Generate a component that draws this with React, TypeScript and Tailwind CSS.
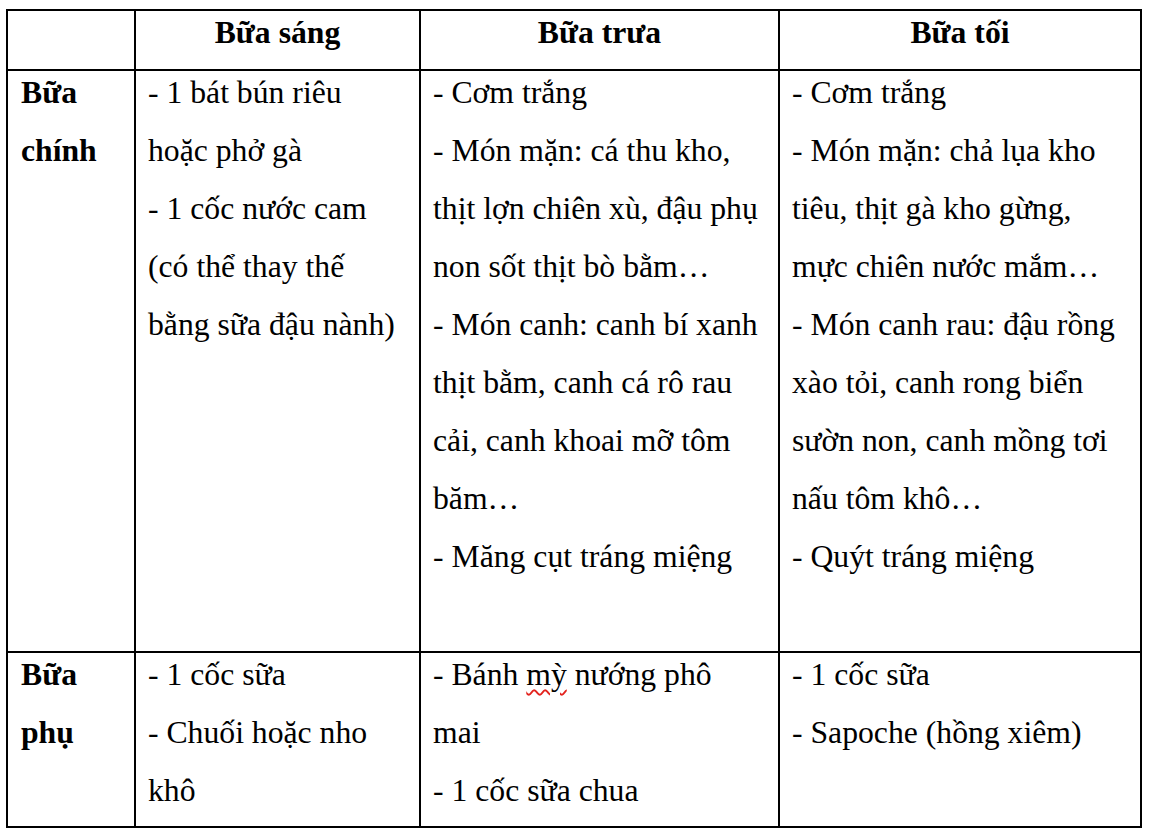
import React from 'react';

type Line = React.ReactNode;

const header = ['', 'Bữa sáng', 'Bữa trưa', 'Bữa tối'];

const rows: { label: string[]; cells: Line[][] }[] = [
  {
    label: ['Bữa', 'chính'],
    cells: [
      ['- 1 bát bún riêu', 'hoặc phở gà', '- 1 cốc nước cam', '(có thể thay thế', 'bằng sữa đậu nành)'],
      [
        '- Cơm trắng',
        '- Món mặn: cá thu kho,',
        'thịt lợn chiên xù, đậu phụ',
        'non sốt thịt bò bằm…',
        '- Món canh: canh bí xanh',
        'thịt bằm, canh cá rô rau',
        'cải, canh khoai mỡ tôm',
        'băm…',
        '- Măng cụt tráng miệng',
      ],
      [
        '- Cơm trắng',
        '- Món mặn: chả lụa kho',
        'tiêu, thịt gà kho gừng,',
        'mực chiên nước mắm…',
        '- Món canh rau: đậu rồng',
        'xào tỏi, canh rong biển',
        'sườn non, canh mồng tơi',
        'nấu tôm khô…',
        '- Quýt tráng miệng',
      ],
    ],
  },
  {
    label: ['Bữa', 'phụ'],
    cells: [
      ['- 1 cốc sữa', '- Chuối hoặc nho', 'khô'],
      [
        <>
          - Bánh{' '}
          <span className="underline decoration-wavy decoration-[#e3231e] decoration-[1.5px] underline-offset-[4px]">mỳ</span>{' '}
          nướng phô
        </>,
        'mai',
        '- 1 cốc sữa chua',
      ],
      ['- 1 cốc sữa', '- Sapoche (hồng xiêm)'],
    ],
  },
];

function Lines({ lines, bold }: { lines: Line[]; bold?: boolean }) {
  return (
    <>
      {lines.map((line, i) => (
        <div key={i} className={`h-[58px] leading-[44px] whitespace-nowrap ${bold ? 'font-bold' : ''}`}>
          {line}
        </div>
      ))}
    </>
  );
}

export default function App() {
  return (
    <div className="min-h-screen bg-white pl-[6px] pt-[9px] text-black text-[31.7px] font-['Liberation_Serif','DejaVu_Serif',serif]">
      <div className="inline-grid grid-cols-[126px_283px_357px_360px] grid-rows-[58px_580px_173px] gap-[2px] p-[2px] bg-black">
        {header.map((h, i) => (
          <div key={i} className="bg-white px-[12px] text-center">
            {h && <Lines lines={[h]} bold />}
          </div>
        ))}
        {rows.map((row, r) => (
          <React.Fragment key={r}>
            <div className="bg-white px-[13px]">
              <Lines lines={row.label} bold />
            </div>
            {row.cells.map((cell, c) => (
              <div key={c} className="bg-white px-[12px]">
                <Lines lines={cell} />
              </div>
            ))}
          </React.Fragment>
        ))}
      </div>
    </div>
  );
}
